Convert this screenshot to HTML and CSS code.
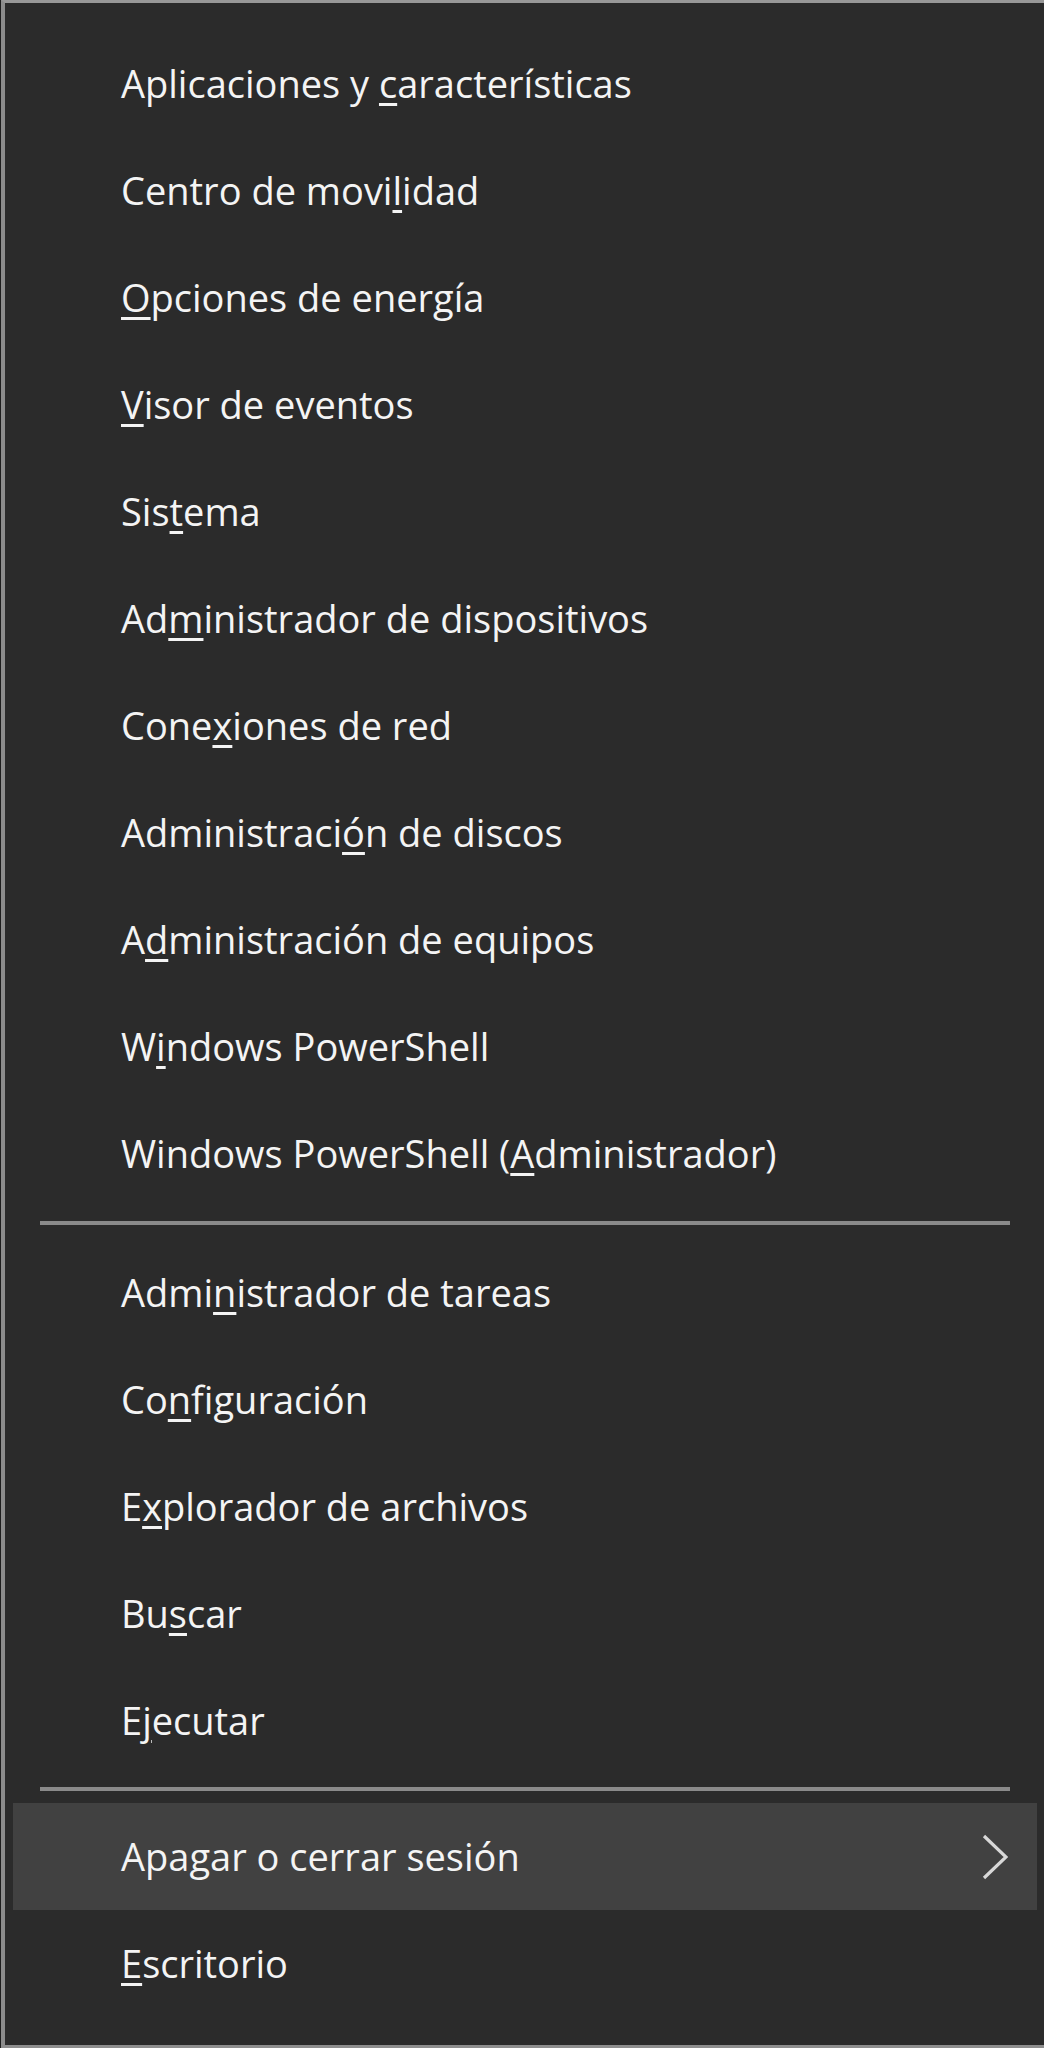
FILE: index.html
```html
<!DOCTYPE html>
<html lang="es">
<head>
<meta charset="utf-8">
<title>Menú</title>
<link rel="stylesheet" href="styles.css">
</head>
<body>
<div class="menu">
  <div class="group">
    <div class="item"><span class="label">Aplicaciones y <u>c</u>aracterísticas</span></div>
    <div class="item"><span class="label">Centro de movi<u>l</u>idad</span></div>
    <div class="item"><span class="label"><u>O</u>pciones de energía</span></div>
    <div class="item"><span class="label"><u>V</u>isor de eventos</span></div>
    <div class="item"><span class="label">Sis<u>t</u>ema</span></div>
    <div class="item"><span class="label">Ad<u>m</u>inistrador de dispositivos</span></div>
    <div class="item"><span class="label">Cone<u>x</u>iones de red</span></div>
    <div class="item"><span class="label">Administraci<u>ó</u>n de discos</span></div>
    <div class="item"><span class="label">A<u>d</u>ministración de equipos</span></div>
    <div class="item"><span class="label">W<u>i</u>ndows PowerShell</span></div>
    <div class="item"><span class="label">Windows PowerShell (<u>A</u>dministrador)</span></div>
  </div>
  <div class="sep sep-1"></div>
  <div class="group">
    <div class="item"><span class="label">Admi<u>n</u>istrador de tareas</span></div>
    <div class="item"><span class="label">Co<u>n</u>figuración</span></div>
    <div class="item"><span class="label">E<u>x</u>plorador de archivos</span></div>
    <div class="item"><span class="label">Bu<u>s</u>car</span></div>
    <div class="item"><span class="label">E<u>j</u>ecutar</span></div>
  </div>
  <div class="sep sep-2"></div>
  <div class="group">
    <div class="item item-active">
      <span class="label">Apa<u>g</u>ar o cerrar sesión</span>
      <svg class="chevron" width="26" height="46" viewBox="0 0 26 46" aria-hidden="true">
        <polyline points="2,2 24,23 2,44" fill="none" stroke="#d8d8d8" stroke-width="3.2" stroke-linejoin="miter"/>
      </svg>
    </div>
    <div class="item"><span class="label"><u>E</u>scritorio</span></div>
  </div>
</div>
</body>
</html>
```

FILE: styles.css
```css
html, body {
  margin: 0;
  padding: 0;
}

body {
  background: #1e1e1e;
  width: 1044px;
  height: 2048px;
  overflow: hidden;
}

.menu {
  box-sizing: border-box;
  margin-left: 1px;
  height: 2048px;
  background: #2b2b2b;
  border-left: 4px solid #8c8c8c;
  border-top: 3px solid #989898;
  border-bottom: 3px solid #8e8e8e;
  padding-top: 27px;
  font-family: "Open Sans", "Noto Sans", sans-serif;
  font-size: 38px;
  color: #f4f4f4;
}

.group {
  display: flex;
  flex-direction: column;
}

.item {
  display: flex;
  align-items: center;
  height: 107px;
  margin: 0 7px 0 8px;
  padding-left: 108px;
  padding-right: 29px;
  white-space: nowrap;
}

.label {
  white-space: pre;
  padding-bottom: 2px;
}

.item u {
  text-decoration-thickness: 2.5px;
  text-underline-offset: 5px;
}

.item-active {
  background: #414141;
}

.chevron {
  margin-left: auto;
}

.sep {
  height: 4px;
  background: #8a8a8a;
  margin-left: 35px;
  margin-right: 34px;
}

.sep-1 {
  margin-top: 14px;
  margin-bottom: 14px;
}

.sep-2 {
  margin-top: 13px;
  margin-bottom: 12px;
}
```
